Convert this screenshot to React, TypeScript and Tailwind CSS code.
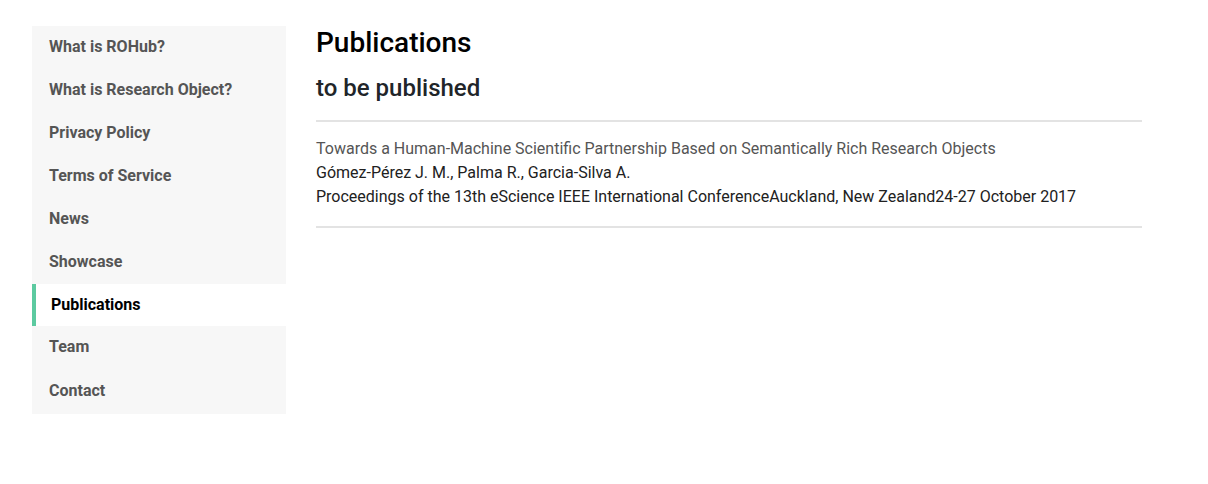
const items = [
  "What is ROHub?",
  "What is Research Object?",
  "Privacy Policy",
  "Terms of Service",
  "News",
  "Showcase",
  "Publications",
  "Team",
  "Contact",
];

function SideNav() {
  return (
    <nav className="w-[254px] shrink-0 bg-[#f7f7f7] flex flex-col">
      {items.map((name, i) =>
        name === "Publications" ? (
          <a key={name} className="h-[42px] flex items-center bg-white border-l-4 border-[#5ccaa0] pl-[15px] pb-[1px] text-[16px] font-bold text-black">
            {name}
          </a>
        ) : (
          <a key={name} className={(i > 6 ? "h-[44px]" : "h-[43px]") + " flex items-center pl-[17px] pb-[2px] text-[16px] font-bold text-[#555555]"}>
            {name}
          </a>
        )
      )}
    </nav>
  );
}

export default function App() {
  return (
    <div className="w-[1208px] h-[484px] bg-white font-['Roboto',sans-serif]">
      <div className="flex items-start gap-[30px] pl-[32px] pt-[26px]">
        <SideNav />
        <main className="w-[826px]">
          <h1 className="text-[28px] font-medium text-black leading-[34px]">Publications</h1>
          <h2 className="text-[24px] font-medium text-[#212529] leading-[30px] mt-[13px]">to be published</h2>
          <hr className="mt-[17px] border-t-2 border-[#e3e3e3]" />
          <div className="pt-[15px] pb-[17px] text-[16px] leading-[24px]">
            <div className="text-[#555555]">Towards a Human-Machine Scientific Partnership Based on Semantically Rich Research Objects</div>
            <div className="text-[#212121]">Gómez-Pérez J. M., Palma R., Garcia-Silva A.</div>
            <div className="text-[#212121]">Proceedings of the 13th eScience IEEE International ConferenceAuckland, New Zealand24-27 October 2017</div>
          </div>
          <hr className="border-t-2 border-[#e3e3e3]" />
        </main>
      </div>
    </div>
  );
}
